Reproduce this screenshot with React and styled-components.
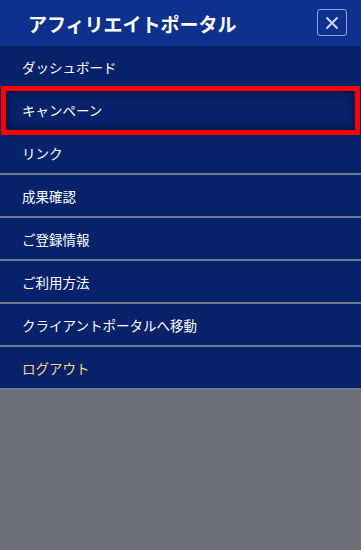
import React from 'react'
import styled, { createGlobalStyle } from 'styled-components'

const GlobalStyle = createGlobalStyle`
  html, body {
    margin: 0;
    padding: 0;
    background: #6c6f75;
    font-family: 'Noto Sans CJK JP', 'Noto Sans', sans-serif;
  }
`

const Panel = styled.nav`
  width: 361px;
  display: flex;
  flex-direction: column;
`

const Header = styled.header`
  height: 46px;
  background: #0e318d;
  display: flex;
  align-items: center;
  justify-content: space-between;
  padding: 0 14px 0 28px;
  box-sizing: border-box;
`

const Title = styled.h1`
  margin: 0;
  color: #ffffff;
  font-size: 19px;
  font-weight: 700;
  line-height: 1;
`

const CloseButton = styled.button`
  width: 30px;
  height: 27px;
  margin-top: -1px;
  padding: 0;
  display: flex;
  align-items: center;
  justify-content: center;
  background: transparent;
  border: 1px solid rgba(190, 202, 240, 0.75);
  border-radius: 3px;
  cursor: pointer;
`

const Menu = styled.ul`
  list-style: none;
  margin: 0;
  padding: 0;
  background: #07226a;
`

const Item = styled.li`
  position: relative;
  height: 43px;
  box-sizing: border-box;
  border-bottom: 2px solid ${props => props.plain ? '#07226a' : '#747b91'};
  display: flex;
  align-items: center;
  padding: 1px 22px 0;
  color: ${props => props.accent ? '#f2d88c' : '#ffffff'};
  font-size: 13.5px;

  ${props => props.active && `
    &::after {
      content: '';
      position: absolute;
      top: -3px;
      bottom: -5px;
      left: 1px;
      right: 1px;
      border: 5px solid #ff0000;
      box-shadow: inset 0 0 6px 2px rgba(0, 8, 40, 0.55);
      pointer-events: none;
      z-index: 1;
    }
  `}
`

const items = [
  { label: 'ダッシュボード', plain: true },
  { label: 'キャンペーン', active: true, plain: true },
  { label: 'リンク' },
  { label: '成果確認' },
  { label: 'ご登録情報' },
  { label: 'ご利用方法' },
  { label: 'クライアントポータルへ移動' },
  { label: 'ログアウト', accent: true },
]

export default function App() {
  return (
    <>
      <GlobalStyle />
      <Panel>
        <Header>
          <Title>アフィリエイトポータル</Title>
          <CloseButton aria-label="close">
            <svg width="14" height="14" viewBox="0 0 14 14">
              <path d="M2 2 L12 12 M12 2 L2 12" stroke="#d3daf0" strokeWidth="1.8" strokeLinecap="round" />
            </svg>
          </CloseButton>
        </Header>
        <Menu>
          {items.map(it => (
            <Item key={it.label} active={it.active} accent={it.accent} plain={it.plain}>
              {it.label}
            </Item>
          ))}
        </Menu>
      </Panel>
    </>
  )
}
